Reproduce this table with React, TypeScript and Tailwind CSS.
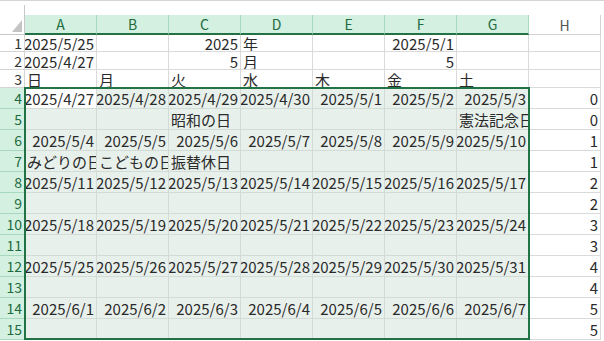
import React from "react";

const COLS = ["A", "B", "C", "D", "E", "F", "G", "H"];

type Cell = { v: string; right?: boolean };

function buildRows(): Cell[][] {
  const rows: Cell[][] = [];
  const e = (): Cell => ({ v: "" });
  const n = (v: string): Cell => ({ v, right: true });
  const t = (v: string): Cell => ({ v });

  rows.push([n("2025/5/25"), e(), n("2025"), t("年"), e(), n("2025/5/1"), e(), e()]);
  rows.push([n("2025/4/27"), e(), n("5"), t("月"), e(), n("5"), e(), e()]);
  rows.push(["日", "月", "火", "水", "木", "金", "土"].map(t).concat([e()]));

  const start = new Date(2025, 3, 27);
  const holidays: Record<number, string[]> = {
    0: ["", "", "昭和の日", "", "", "", "憲法記念日"],
    1: ["みどりの日", "こどもの日", "振替休日", "", "", "", ""],
  };
  for (let w = 0; w < 6; w++) {
    const dates: Cell[] = [];
    for (let d = 0; d < 7; d++) {
      const dt = new Date(start.getTime());
      dt.setDate(start.getDate() + w * 7 + d);
      dates.push(n(`${dt.getFullYear()}/${dt.getMonth() + 1}/${dt.getDate()}`));
    }
    dates.push(n(String(w)));
    rows.push(dates);
    const hol = (holidays[w] || ["", "", "", "", "", "", ""]).map(t);
    hol.push(n(String(w)));
    rows.push(hol);
  }
  return rows;
}

const ROWS = buildRows();
const HEIGHTS = [17, 18, 18, 21, 21, 21, 21, 21, 21, 21, 21, 21, 21, 21, 21];

export default function App() {
  return (
    <div
      className="relative w-[604px] h-[341px] overflow-hidden bg-white text-[15px] text-[#2a2a2a]"
      style={{ fontFamily: '"Noto Sans CJK JP", "Noto Sans", sans-serif' }}
    >
      {/* strip above the headers */}
      <div className="h-[15px] border-t border-[#d4d4d4] flex">
        <div className="w-[25px] mt-[4px] border-r border-[#c8c8c8]" />
      </div>

      {/* column headers */}
      <div className="flex h-[20px]">
        <div className="w-[25px] h-[20px] border-r border-b border-[#c8c8c8] flex items-end justify-end pr-[2px] pb-[2px]">
          <svg width="10" height="12" viewBox="0 0 10 12">
            <polygon points="10,0 10,12 0,12" fill="#c4c4c4" />
          </svg>
        </div>
        {COLS.map((c) => {
          const sel = c !== "H";
          return (
            <div
              key={c}
              className={
                sel
                  ? "w-[72px] h-[20px] bg-[#d3f0e0] border-r border-[#a8d8bd] border-b-2 border-b-[#217346] text-[#1e6b3f] flex items-center justify-center text-[14px] leading-none"
                  : "w-[72px] h-[20px] bg-white border-r border-b border-[#d4d4d4] text-[#555] flex items-center justify-center text-[14px] leading-none"
              }
            >
              {c}
            </div>
          );
        })}
      </div>

      {/* body rows */}
      {ROWS.map((row, r) => {
        const sel = r >= 3;
        const h = HEIGHTS[r];
        return (
          <div key={r} className="flex" style={{ height: h }}>
            <div
              className={
                sel
                  ? "w-[25px] h-full bg-[#d3f0e0] border-r border-b border-[#a8d8bd] text-[#1e6b3f] flex items-center justify-end pr-[2px] text-[14px] leading-none"
                  : "w-[25px] h-full bg-white border-r border-b border-[#d4d4d4] text-[#333] flex items-center justify-end pr-[2px] text-[14px] leading-none"
              }
            >
              {r + 1}
            </div>
            {row.map((cell, c) => {
              const inSel = sel && c < 7;
              const active = r === 3 && c === 0;
              let bg = "bg-white border-[#dadada]";
              if (inSel && !active) bg = "bg-[#e8f0eb] border-[#d3dbd6]";
              if (active) bg = "bg-white border-[#d3dbd6]";
              return (
                <div
                  key={c}
                  className={`w-[72px] h-full border-r border-b ${bg} flex items-center overflow-hidden whitespace-nowrap px-[2px] pt-[1px] leading-none ${
                    cell.right ? "justify-end" : "justify-start"
                  }`}
                >
                  {cell.v}
                </div>
              );
            })}
          </div>
        );
      })}

      {/* selection outline */}
      <div className="absolute left-[24px] top-[87px] w-[506px] h-[253px] border-2 border-[#217346] pointer-events-none" />
    </div>
  );
}
